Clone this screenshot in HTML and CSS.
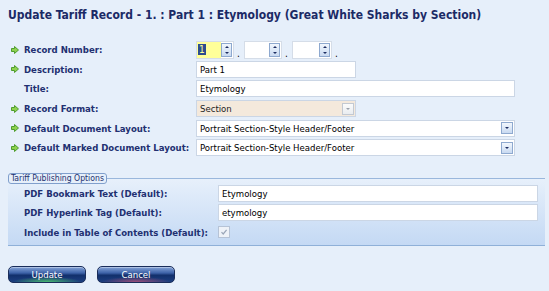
FILE: index.html
```html
<html>
<head>
    <title>Update Tariff Record</title>
    <link rel="stylesheet" href="styles.css">
</head>
<body>
<div class="page">
    <h1 class="title">Update Tariff Record - 1. : Part 1 : Etymology (Great White Sharks by Section)</h1>

    <form class="record-form">
        <div class="row">
            <svg class="req" width="8" height="8" viewBox="0 0 8 8"><path d="M0.5 2.5H3.5V0.5L7.5 4L3.5 7.5V5.5H0.5Z" fill="#8fd14f" stroke="#4f9d2d" stroke-width="1"/></svg>
            <label class="label">Record Number:</label>
            <div class="numbers">
                <span class="spin active"><span class="spin-val"><span class="sel">1</span></span><span class="spin-btn"><i class="up"></i><i class="down"></i></span></span>
                <span class="dot">.</span>
                <span class="spin"><span class="spin-val"></span><span class="spin-btn"><i class="up"></i><i class="down"></i></span></span>
                <span class="dot">.</span>
                <span class="spin last"><span class="spin-val"></span><span class="spin-btn"><i class="up"></i><i class="down"></i></span></span>
                <span class="dot">.</span>
            </div>
        </div>
        <div class="row">
            <svg class="req" width="8" height="8" viewBox="0 0 8 8"><path d="M0.5 2.5H3.5V0.5L7.5 4L3.5 7.5V5.5H0.5Z" fill="#8fd14f" stroke="#4f9d2d" stroke-width="1"/></svg>
            <label class="label">Description:</label>
            <div class="field short">Part 1</div>
        </div>
        <div class="row">
            <span class="req"></span>
            <label class="label">Title:</label>
            <div class="field wide">Etymology</div>
        </div>
        <div class="row">
            <svg class="req" width="8" height="8" viewBox="0 0 8 8"><path d="M0.5 2.5H3.5V0.5L7.5 4L3.5 7.5V5.5H0.5Z" fill="#8fd14f" stroke="#4f9d2d" stroke-width="1"/></svg>
            <label class="label">Record Format:</label>
            <div class="field short combo disabled">Section<span class="drop"><i></i></span></div>
        </div>
        <div class="row">
            <svg class="req" width="8" height="8" viewBox="0 0 8 8"><path d="M0.5 2.5H3.5V0.5L7.5 4L3.5 7.5V5.5H0.5Z" fill="#8fd14f" stroke="#4f9d2d" stroke-width="1"/></svg>
            <label class="label">Default Document Layout:</label>
            <div class="field wide combo">Portrait Section-Style Header/Footer<span class="drop"><i></i></span></div>
        </div>
        <div class="row">
            <svg class="req" width="8" height="8" viewBox="0 0 8 8"><path d="M0.5 2.5H3.5V0.5L7.5 4L3.5 7.5V5.5H0.5Z" fill="#8fd14f" stroke="#4f9d2d" stroke-width="1"/></svg>
            <label class="label">Default Marked Document Layout:</label>
            <div class="field wide combo">Portrait Section-Style Header/Footer<span class="drop"><i></i></span></div>
        </div>

        <div class="options">
            <div class="legend">Tariff Publishing Options</div>
            <div class="opt-row">
                <label class="opt-label">PDF Bookmark Text (Default):</label>
                <div class="field full">Etymology</div>
            </div>
            <div class="opt-row">
                <label class="opt-label">PDF Hyperlink Tag (Default):</label>
                <div class="field full">etymology</div>
            </div>
            <div class="opt-row">
                <label class="opt-label">Include in Table of Contents (Default):</label>
                <span class="check">
                    <svg width="8" height="8" viewBox="0 0 8 8"><path d="M1.5 4.2L3.2 6L6.6 1.8" fill="none" stroke="#9aa6b8" stroke-width="1.2"/></svg>
                </span>
            </div>
        </div>

        <div class="buttons">
            <button type="button" class="btn btn-update">Update</button>
            <button type="button" class="btn btn-cancel">Cancel</button>
        </div>
    </form>
</div>
</body>
</html>
```

FILE: styles.css
```css
body {
    margin: 0;
    background-color: #e6effa;
    font-family: "DejaVu Sans Condensed", "DejaVu Sans", sans-serif;
    font-stretch: condensed;
    color: #1f2d6e;
}

.page {
    padding: 7px 4px 0 8px;
}

.title {
    margin: 0;
    font-size: 12px;
    line-height: 16px;
    font-weight: bold;
    color: #1b2a66;
}

.record-form {
    margin: 17px 0 0 0;
}

.row {
    display: flex;
    align-items: center;
    height: 19.6px;
    padding-left: 3px;
}

.req {
    display: block;
    width: 8px;
    height: 8px;
    margin-right: 5px;
    flex-shrink: 0;
}

.label {
    width: 172px;
    font-size: 9.5px;
    font-weight: bold;
    color: #223071;
}

.field {
    box-sizing: border-box;
    height: 17px;
    line-height: 15px;
    padding-left: 3px;
    border: 1px solid #cbd6e5;
    background-color: #fff;
    font-size: 9.5px;
    color: #000;
}

.short {
    width: 160px;
}

.wide {
    width: 319px;
}

.full {
    width: 320px;
}

.combo {
    display: flex;
    justify-content: space-between;
    align-items: center;
    padding-right: 1px;
}

.disabled {
    background-color: #f4e9dc;
    color: #222;
}

.drop {
    box-sizing: border-box;
    width: 12px;
    height: 12px;
    border: 1px solid #8ea9cf;
    background: linear-gradient(#f2f7fd, #c9daf1);
    display: flex;
    align-items: center;
    justify-content: center;
}

.drop i {
    display: block;
    width: 0;
    height: 0;
    border-left: 2px solid transparent;
    border-right: 2px solid transparent;
    border-top: 2px solid #1c2c60;
}

.disabled .drop {
    border-color: #c3c9d2;
    background: linear-gradient(#fbfbfb, #e9ecf0);
}

.disabled .drop i {
    border-top-color: #9aa0aa;
}

.numbers {
    display: flex;
    align-items: flex-end;
    height: 18px;
}

.spin {
    box-sizing: border-box;
    display: flex;
    align-items: center;
    width: 38px;
    height: 18px;
    border: 1px solid #d5dde8;
    background-color: #fff;
    padding-right: 1px;
}

.last {
    width: 40px;
}

.spin-val {
    flex: 1;
    height: 16px;
    display: flex;
    align-items: center;
    padding-left: 1px;
}

.active .spin-val {
    background-color: #ffff99;
}

.sel {
    background-color: #2c4c8e;
    color: #ffff99;
    font-size: 10px;
    line-height: 11px;
    padding: 0 1px;
}

.spin-btn {
    box-sizing: border-box;
    width: 11px;
    height: 14px;
    border: 1px solid #8ea9cf;
    background: linear-gradient(#f2f7fd, #c9daf1);
    display: flex;
    flex-direction: column;
    justify-content: space-around;
    align-items: center;
}

.spin-btn i {
    display: block;
    width: 0;
    height: 0;
    border-left: 2px solid transparent;
    border-right: 2px solid transparent;
}

.spin-btn .up {
    border-bottom: 2px solid #1c2c60;
}

.spin-btn .down {
    border-top: 2px solid #1c2c60;
}

.dot {
    width: 10px;
    padding-left: 3px;
    box-sizing: border-box;
    font-size: 10px;
    line-height: 10px;
    color: #000;
}

.options {
    margin-top: 20px;
    border-top: 1px solid #9ab7dc;
    border-bottom: 1px solid #8fb0d8;
    background: linear-gradient(#e7f0fb, #c4d9f4);
    padding-bottom: 3px;
}

.legend {
    display: inline-block;
    box-sizing: border-box;
    height: 11px;
    margin-top: -6px;
    padding: 0 2px;
    border: 1px solid #809fcc;
    border-radius: 3px;
    background-color: #e6effa;
    font-size: 8.6px;
    line-height: 9px;
    color: #24326f;
    vertical-align: top;
}

.opt-row {
    display: flex;
    align-items: center;
    height: 19.5px;
    padding-left: 16px;
}

.opt-label {
    width: 194px;
    font-size: 9.5px;
    font-weight: bold;
    color: #223071;
}

.check {
    box-sizing: border-box;
    width: 12px;
    height: 12px;
    border: 1px solid #b6c3d6;
    background-color: #eef2f8;
    display: flex;
    align-items: center;
    justify-content: center;
}

.check svg {
    display: block;
}

.buttons {
    display: flex;
    gap: 11px;
    margin-top: 20px;
}

.btn {
    width: 78px;
    height: 17px;
    padding: 0;
    border: 1px solid #1a2d5a;
    border-radius: 5px;
    color: #fff;
    font-family: "DejaVu Sans Condensed", "DejaVu Sans", sans-serif;
    font-stretch: condensed;
    font-size: 9.5px;
    line-height: 15px;
    box-shadow: inset 0 1px 0 rgba(255, 255, 255, 0.35);
}

.btn-update {
    background:
        radial-gradient(ellipse 45% 35% at 50% 100%, rgba(80, 200, 110, 0.9), rgba(80, 200, 110, 0)),
        linear-gradient(#86a4d8 0%, #3d62a8 40%, #12306c 55%, #1d3f80 100%);
}

.btn-cancel {
    background:
        radial-gradient(ellipse 45% 35% at 50% 100%, rgba(170, 80, 120, 0.9), rgba(170, 80, 120, 0)),
        linear-gradient(#86a4d8 0%, #3d62a8 40%, #12306c 55%, #1d3f80 100%);
}
```
